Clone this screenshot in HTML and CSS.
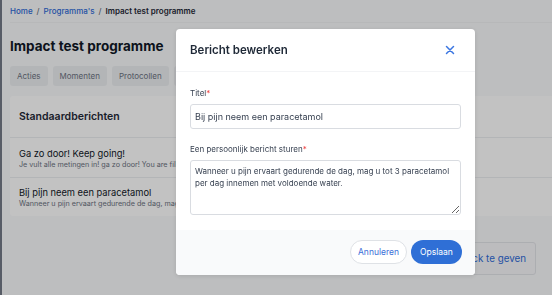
FILE: index.html
```html
<!DOCTYPE html>
<html lang="nl">

<head>
    <meta charset="UTF-8">
    <meta name="viewport" content="width=device-width, initial-scale=1.0">
    <title>Impact test programme</title>
    <link rel="stylesheet" href="styles.css">
</head>

<body>
    <div class="layout">
        <div class="sidebar"></div>

        <main class="main">
            <nav class="breadcrumb">
                <a href="#">Home</a>
                <span class="sep">/</span>
                <a href="#">Programma's</a>
                <span class="sep">/</span>
                <span class="current">Impact test programme</span>
            </nav>

            <h1 class="page-title">Impact test programme</h1>

            <div class="tabs">
                <div class="tab">Acties</div>
                <div class="tab">Momenten</div>
                <div class="tab">Protocollen</div>
                <div class="tab">Berichten</div>
                <div class="tab">Vragenlijsten</div>
            </div>

            <div class="card">
                <div class="card-header">Standaardberichten</div>
                <div class="message-row">
                    <div class="message-title">Ga zo door! Keep going!</div>
                    <div class="message-text">Je vult alle metingen in! ga zo door! You are filling in all the measurements! keep going!</div>
                </div>
                <div class="message-row">
                    <div class="message-title">Bij pijn neem een paracetamol</div>
                    <div class="message-text">Wanneer u pijn ervaart gedurende de dag, mag u tot 3 paracetamol per dag innemen met voldoende water.</div>
                </div>
            </div>

            <div class="feedback-row">
                <div class="feedback-box">Feedback te geven</div>
            </div>
        </main>
    </div>

    <div class="overlay"></div>

    <div class="modal">
        <div class="modal-header">
            <h2>Bericht bewerken</h2>
            <button class="close-btn" aria-label="Sluiten">
                <svg width="10" height="10" viewBox="0 0 10 10">
                    <path d="M1.5 1.5 L8.5 8.5 M8.5 1.5 L1.5 8.5" stroke="#3b76e1" stroke-width="1.5" stroke-linecap="round" fill="none" />
                </svg>
            </button>
        </div>

        <div class="modal-body">
            <label for="titel">Titel<span class="req">*</span></label>
            <input type="text" id="titel" value="Bij pijn neem een paracetamol">

            <label for="bericht">Een persoonlijk bericht sturen<span class="req">*</span></label>
            <textarea id="bericht">Wanneer u pijn ervaart gedurende de dag, mag u tot 3 paracetamol per dag innemen met voldoende water.</textarea>
        </div>

        <div class="modal-footer">
            <button class="btn btn-cancel">Annuleren</button>
            <button class="btn btn-save">Opslaan</button>
        </div>
    </div>
</body>

</html>
```

FILE: styles.css
```css
body {
    font-family: Inter, "Noto Sans", Arial, sans-serif;
    background-color: #f9fafb;
    margin: 0;
    padding: 0;
    height: 100vh;
    overflow: hidden;
    color: #111827;
}

.layout {
    display: flex;
    height: 100%;
}

.sidebar {
    width: 2px;
    flex-shrink: 0;
    background-color: #737a86;
}

.main {
    flex-grow: 1;
    padding-left: 8px;
    min-width: 0;
}

.breadcrumb {
    height: 22px;
    display: flex;
    align-items: center;
    gap: 4px;
    font-size: 8px;
    font-weight: 500;
    border-bottom: 1px solid #f1f2f4;
    margin-bottom: 14px;
}

.breadcrumb a {
    color: #2f6bd8;
    text-decoration: none;
}

.breadcrumb .sep {
    color: #6b7280;
}

.breadcrumb .current {
    color: #1f2937;
    font-weight: 600;
}

.page-title {
    font-size: 13.5px;
    font-weight: 700;
    margin: 0 0 11px 0;
    line-height: 18px;
    color: #111827;
}

.tabs {
    display: flex;
    gap: 5px;
    margin-bottom: 10px;
}

.tab {
    height: 20px;
    padding: 0 7px;
    display: flex;
    align-items: center;
    font-size: 8px;
    color: #6b7280;
    background-color: #eceef1;
    border-radius: 3px;
}

.card {
    background-color: white;
    border-radius: 3px 0 0 3px;
}

.card-header {
    height: 41px;
    display: flex;
    align-items: center;
    padding-left: 9px;
    font-size: 10.5px;
    font-weight: 600;
    color: #1f2937;
    border-bottom: 1px solid #eceef1;
}

.message-row {
    height: 39px;
    padding: 1px 9px 0 9px;
    box-sizing: border-box;
    display: flex;
    flex-direction: column;
    justify-content: center;
    gap: 1px;
    white-space: nowrap;
    overflow: hidden;
}

.message-row + .message-row {
    border-top: 1px solid #eceef1;
}

.message-title {
    font-size: 9.3px;
    color: #111827;
}

.message-text {
    font-size: 7.2px;
    color: #6b7280;
}

.feedback-row {
    display: flex;
    justify-content: flex-end;
    padding: 26px 16px 0 0;
}

.feedback-box {
    width: 264px;
    height: 31px;
    border: 1px solid #e3e5e9;
    border-radius: 3px;
    background-color: #f7f8fa;
    display: flex;
    align-items: center;
    justify-content: flex-end;
    padding-right: 9px;
    font-size: 9.8px;
    color: #2f6bd8;
    white-space: nowrap;
    overflow: hidden;
}

.overlay {
    position: fixed;
    inset: 0;
    background-color: rgba(0, 0, 0, 0.24);
}

.modal {
    position: fixed;
    left: 176px;
    top: 29px;
    width: 299px;
    height: 246px;
    background-color: white;
    border-radius: 4px;
    box-shadow: 0 1px 5px rgba(0, 0, 0, 0.12);
    display: flex;
    flex-direction: column;
    overflow: hidden;
}

.modal-header {
    height: 42px;
    flex-shrink: 0;
    display: flex;
    align-items: center;
    justify-content: space-between;
    padding: 0 20px 0 14px;
    border-bottom: 1px solid #f3f4f6;
}

.modal-header h2 {
    margin: 0;
    font-size: 11.5px;
    font-weight: 600;
    color: #1f2937;
}

.close-btn {
    background: none;
    border: none;
    padding: 0;
    width: 10px;
    height: 10px;
    display: flex;
    cursor: pointer;
}

.modal-body {
    flex-grow: 1;
    padding: 16px 14px 0 14px;
    display: flex;
    flex-direction: column;
}

.modal-body label {
    font-size: 8px;
    line-height: 10px;
    color: #374151;
    margin-bottom: 6px;
}

.req {
    color: #ef4444;
}

.modal-body input,
.modal-body textarea {
    font-family: inherit;
    color: #374151;
    border: 1px solid #d9dce1;
    border-radius: 3px;
    box-sizing: border-box;
    padding: 0 4px;
    margin: 0;
    width: 100%;
}

.modal-body input {
    height: 25px;
    font-size: 9px;
    margin-bottom: 15px;
}

.modal-body textarea {
    height: 55px;
    font-size: 8px;
    padding-top: 5px;
    line-height: 11.5px;
    resize: vertical;
}

.modal-footer {
    height: 45px;
    flex-shrink: 0;
    background-color: #f9fafb;
    display: flex;
    align-items: center;
    justify-content: flex-end;
    gap: 4px;
    padding: 0 13px 2px 0;
    box-sizing: border-box;
}

.btn {
    height: 24px;
    border-radius: 12px;
    font-family: inherit;
    font-size: 8.5px;
    padding: 0;
    cursor: pointer;
}

.btn-cancel {
    width: 57px;
    background-color: white;
    border: 1px solid #dfe2e6;
    color: #3b6fd8;
}

.btn-save {
    width: 51px;
    background-color: #2f6fd6;
    border: none;
    color: white;
}
```
